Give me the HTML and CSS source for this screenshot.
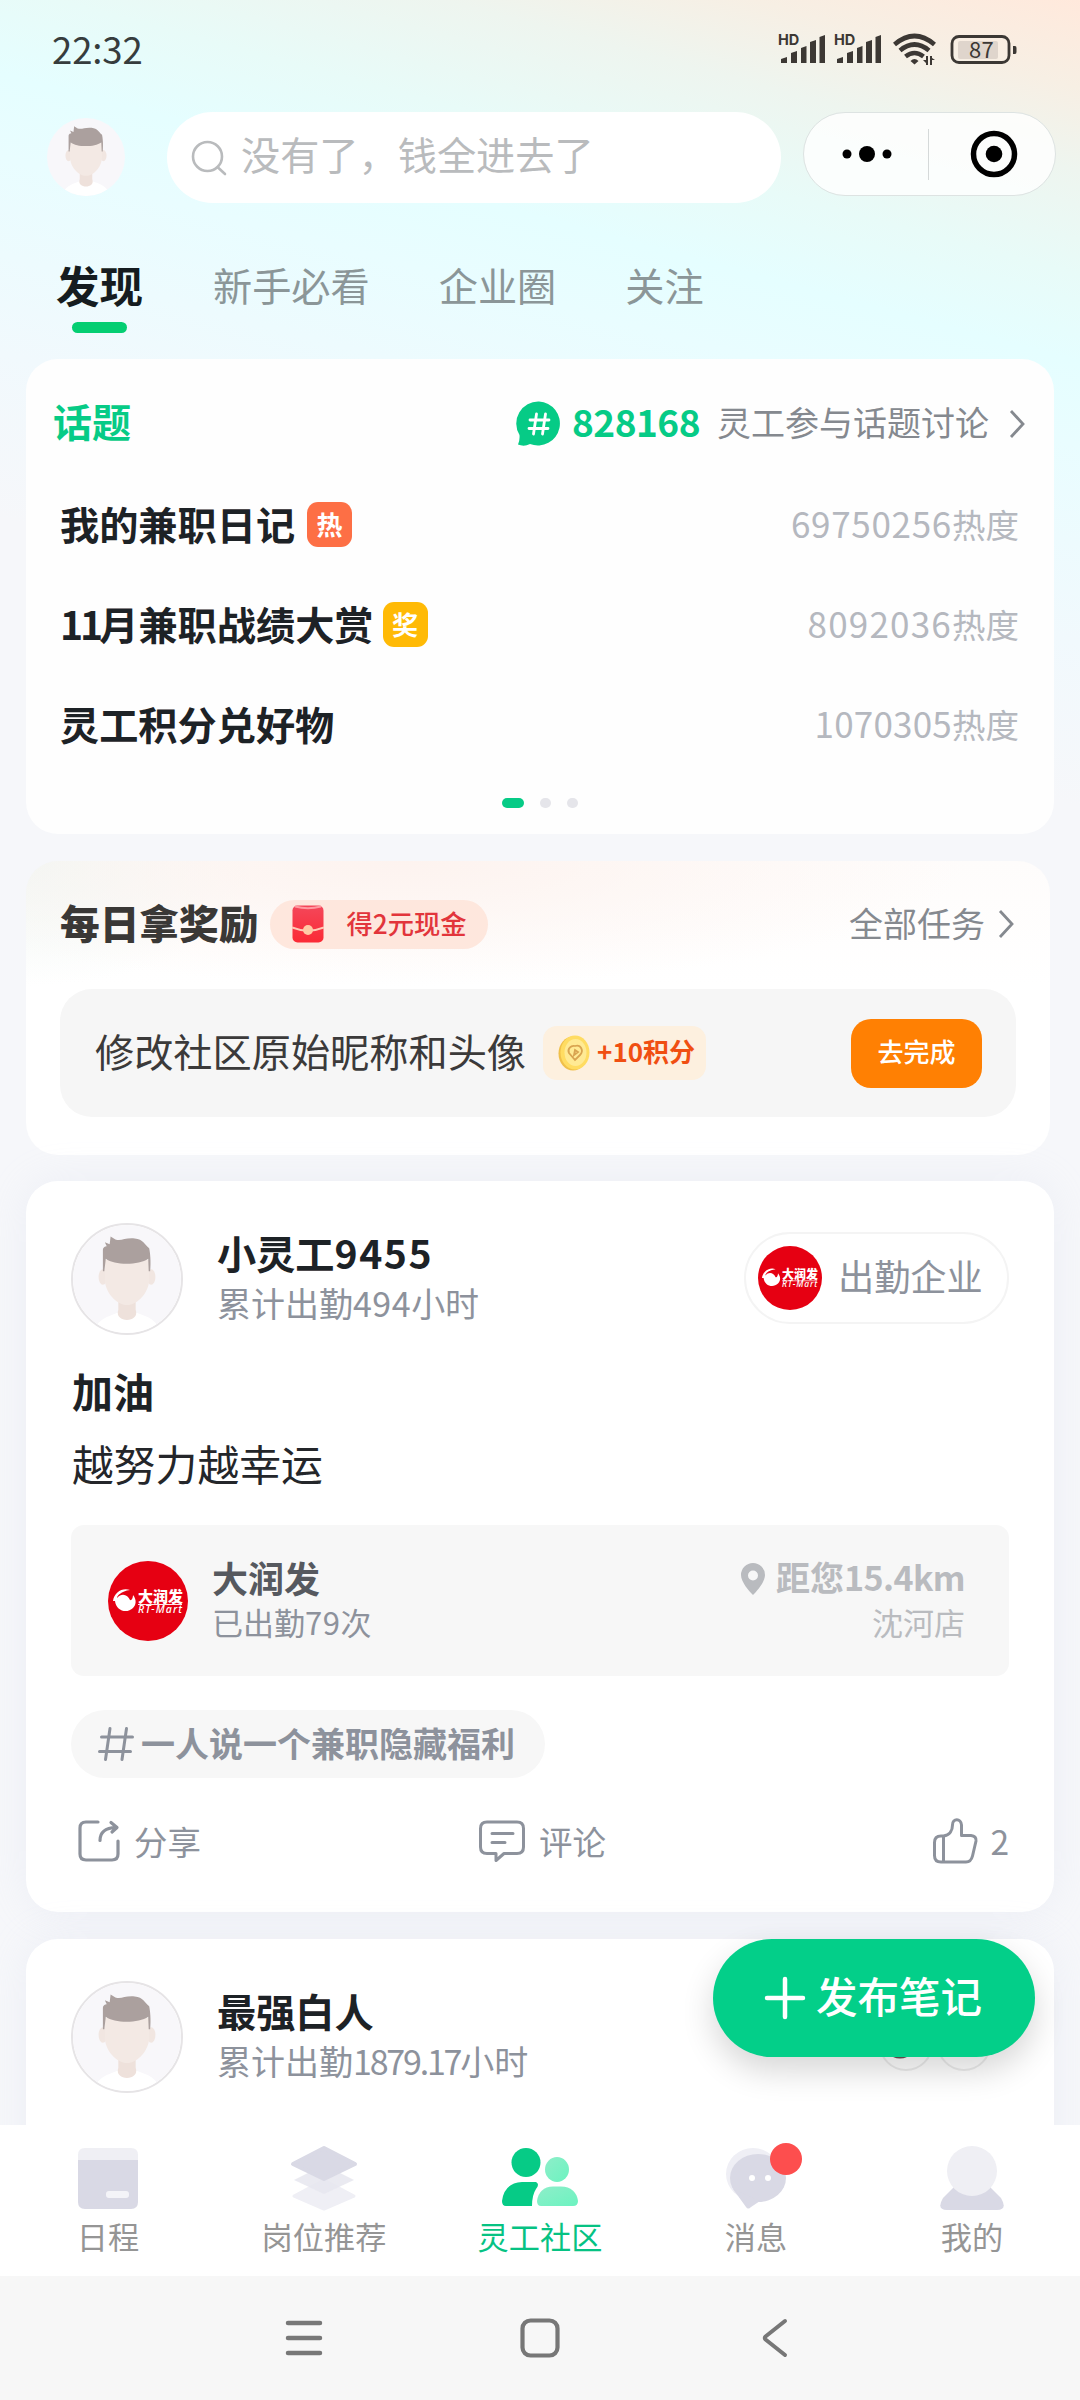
FILE: index.html
```html
<!DOCTYPE html>
<html lang="zh-CN">
<head>
<meta charset="utf-8">
<title>灵工社区</title>
<link rel="stylesheet" href="styles.css">
</head>
<body>
<svg class="defs" width="0" height="0">
  <defs>
    <clipPath id="round"><circle cx="56" cy="56" r="56"/></clipPath>
    <linearGradient id="packet" x1="0" y1="0" x2="0" y2="1"><stop offset="0" stop-color="#f4475a"/><stop offset="1" stop-color="#fb2a35"/></linearGradient>
    <linearGradient id="mint" x1="0" y1="0" x2="1" y2="1"><stop offset="0" stop-color="#8eeec9"/><stop offset="1" stop-color="#6cf3c0"/></linearGradient>
    <symbol id="avatar" viewBox="0 0 112 112">
      <g clip-path="url(#round)">
        <rect width="112" height="112" fill="#f8f7fa"/>
        <path d="M22 112C24 98 36 95 46 91H66C77 95 88 98 90 112Z" fill="#fff"/>
        <path d="M47 74H65V88C70 102 42 102 47 88Z" fill="#eee1db"/>
        <ellipse cx="31" cy="54" rx="4.5" ry="8" fill="#f1e6e1"/>
        <ellipse cx="81" cy="54" rx="4.5" ry="8" fill="#f1e6e1"/>
        <path d="M33 36H79V56C79 70 67 83 56 83S33 70 33 56Z" fill="#f3e9e4"/>
        <path d="M31 48V26C31 22 35 22 35 22L33 18 38 20 39 12 44 15C50 17 54 13 64 14 73 15 74 20 79 24 80 28 81 38 80 48H78.500L78 35C68 42 43 42 34 35L32.500 48Z" fill="#aba09e"/>
      </g>
    </symbol>
    <symbol id="rtmart" viewBox="0 0 80 80">
      <circle cx="40" cy="40" r="40" fill="#e60012"/>
      <path d="M5 40C6 31 15 26 22 29 13 30 9 35 9 37 14 31 20 34 22 39 24 40 25 36 25 34 29 39 28 44 25 47 19 53 8 50 7 40Z" fill="#fff"/>
      <text x="30" y="41" textLength="45" class="logo-cn">大润发</text>
      <path d="M30 43.5H74" stroke="#fff" stroke-width=".9"/>
      <text x="30" y="51.500" textLength="44" class="logo-en">RT-Mart</text>
    </symbol>
    <symbol id="chevron" viewBox="0 0 16 30"><path d="M2 2L14 15 2 28" fill="none" stroke="currentColor" stroke-width="2.8"/></symbol>
  </defs>
</svg>

<div class="screen">
  <header class="status">
    <span class="clock">22:32</span>
    <svg width="242" height="36" viewBox="0 0 242 36" fill="#3c3834">
      <g>
        <text x="2" y="15" class="hd">HD</text>
        <path d="M5 33V29L11 27V33ZM15 33V23L21 21V33ZM25 33V18L30.500 16V33ZM34 33V12L40 10V33ZM43.500 33V7L49 5V33Z"/>
      </g>
      <g transform="translate(56 0)">
        <text x="2" y="15" class="hd">HD</text>
        <path d="M5 33V29L11 27V33ZM15 33V23L21 21V33ZM25 33V18L30.500 16V33ZM34 33V12L40 10V33ZM43.500 33V7L49 5V33Z"/>
      </g>
      <g fill="none" stroke="#3c3834" stroke-width="4.6">
        <path d="M118.500 14.500Q138.500-2.500 158.500 14.500"/>
        <path d="M124 20.500Q138.500 8.500 153 20.500"/>
        <path d="M129.500 26.500Q138.500 19.500 147.500 26.500"/>
      </g>
      <path d="M134.500 31Q138.500 27 142.500 31L138.500 34.500ZM147 30H150V26H152V35H150V33ZM154 26H156V28L159 30H156V35H154Z"/>
      <rect x="182" y="11" width="40" height="18" rx="2" fill="#dfd5cc"/>
      <rect x="176" y="6.500" width="57" height="26" rx="7" fill="none" stroke="#3c3834" stroke-width="2.800"/>
      <path d="M237 16H239Q240.500 16 240.500 18V22Q240.500 24 239 24H237Z"/>
      <text x="193" y="28" class="pct">87</text>
    </svg>
  </header>

  <div class="topbar">
    <svg class="me" width="78" height="78"><use href="#avatar"/></svg>
    <div class="search">
      <svg width="36" height="36" viewBox="0 0 36 36" fill="none" stroke="#b9bbbd" stroke-width="2.600" stroke-linecap="round"><circle cx="16.500" cy="16.500" r="14.500"/><path d="M27 27.500L34 34"/></svg>
      <span>没有了，钱全进去了</span>
    </div>
    <div class="capsule">
      <svg width="50" height="18" viewBox="0 0 50 18"><circle cx="5" cy="9" r="4.500"/><circle cx="25" cy="9" r="8"/><circle cx="45" cy="9" r="4.500"/></svg>
      <i></i>
      <svg width="48" height="48" viewBox="0 0 48 48"><circle cx="24" cy="24" r="20.500" fill="none" stroke="#000" stroke-width="5.500"/><circle cx="24" cy="24" r="8.300"/></svg>
    </div>
  </div>

  <nav class="tabs">
    <b>发现</b><span>新手必看</span><span>企业圈</span><span>关注</span>
  </nav>

  <main class="feed">
    <section class="card topics">
      <div class="head">
        <h2>话题</h2>
        <svg class="bubble" width="46" height="46" viewBox="0 0 46 46"><path d="M23 0.500A22 22 0 1 1 14 43Q8 46 2 43.500Q4 39 3.500 34A22 22 0 0 1 23 .5Z" fill="#06cb86"/><path d="M20.500 13L17.500 33M29.500 13L26.500 33M14 19H33M13 27.500H32" stroke="#fff" stroke-width="2.800" fill="none" stroke-linecap="round"/></svg>
        <b class="count">828168</b>
        <span class="more">灵工参与话题讨论</span>
        <svg class="chev" width="16" height="30"><use href="#chevron"/></svg>
      </div>
      <div class="row"><b>我的兼职日记</b><em class="hot">热</em><span><i>69750256</i>热度</span></div>
      <div class="row"><b><u>11</u>月兼职战绩大赏</b><em class="prize">奖</em><span><i class="wide">8092036</i>热度</span></div>
      <div class="row"><b>灵工积分兑好物</b><span><i class="tight">1070305</i>热度</span></div>
      <div class="dots"><i class="on"></i><i></i><i></i></div>
    </section>

    <section class="card daily">
      <div class="head">
        <h2>每日拿奖励</h2>
        <div class="cash">
          <svg width="32" height="38" viewBox="0 0 32 38"><rect x=".5" y=".5" width="31" height="37" rx="5" fill="url(#packet)"/><path d="M3 1.500Q16 5 29 1.500" stroke="#ff9aa0" stroke-width="2" fill="none"/><path d="M0 22.500Q16 29 32 22.500" stroke="#ffc9b5" stroke-width="2" fill="none"/><circle cx="16" cy="25" r="5" fill="#ffcba6"/></svg>
          <b>得2元现金</b>
        </div>
        <span class="more">全部任务</span>
        <svg class="chev" width="16" height="30"><use href="#chevron"/></svg>
      </div>
      <div class="task">
        <span class="name">修改社区原始昵称和头像</span>
        <div class="points">
          <svg width="32" height="36" viewBox="0 0 32 36"><ellipse cx="15" cy="18.500" rx="14.500" ry="17" fill="#f0c04a"/><ellipse cx="17" cy="17.500" rx="14.500" ry="17" fill="#ffdc62"/><ellipse cx="17.500" cy="17.500" rx="11" ry="13.500" fill="#ffea94"/><path d="M17 11C23 9 26 16 22 20L17 25 11 18C9 14 13 10 17 11ZM17 15L16 20 20 17Z" fill="none" stroke="#d9a450" stroke-width="1.800"/></svg>
          <b>+10积分</b>
        </div>
        <button>去完成</button>
      </div>
    </section>

    <article class="card post">
      <div class="author">
        <svg class="face" width="112" height="112"><use href="#avatar"/></svg>
        <div class="who"><b>小灵工<u>9455</u></b><span>累计出勤<u>494</u>小时</span></div>
        <div class="company"><svg width="64" height="64"><use href="#rtmart"/></svg><span>出勤企业</span></div>
      </div>
      <h3>加油</h3>
      <p>越努力越幸运</p>
      <div class="shop">
        <svg width="80" height="80"><use href="#rtmart"/></svg>
        <div class="left"><b>大润发</b><span>已出勤<u>79</u>次</span></div>
        <div class="right">
          <b><svg width="24" height="32" viewBox="0 0 24 32"><path fill-rule="evenodd" d="M12 0A12 12 0 0 1 24 12C24 19 16 28 12 32 8 28 0 19 0 12A12 12 0 0 1 12 0ZM12 7.500A5 5 0 1 0 12 17.500 5 5 0 1 0 12 7.500Z" fill="#b9bbbf"/></svg>距您<u>15.4km</u></b>
          <span>沈河店</span>
        </div>
      </div>
      <div class="tag">
        <svg width="36" height="36" viewBox="0 0 36 36" fill="none" stroke="#8d929c" stroke-width="3" stroke-linecap="round"><path d="M12 2.500L7.500 33.500M28.500 2.500L24 33.500M3.500 11H34.500M1.500 25.500H32.500"/></svg>
        <b>一人说一个兼职隐藏福利</b>
      </div>
      <div class="actions">
        <span><svg width="42" height="42" viewBox="0 0 42 42" fill="none" stroke="#8d929c" stroke-width="3.200" stroke-linecap="round" stroke-linejoin="round"><path d="M20 2H8Q2 2 2 8V34Q2 40 8 40H34Q40 40 40 34V21M22 20.500Q22 8 38 7.500M33 2.500L39 7.500 34 12"/></svg>分享</span>
        <span><svg width="46" height="44" viewBox="0 0 46 44" fill="none" stroke="#8d929c" stroke-width="3" stroke-linecap="round" stroke-linejoin="round"><path d="M8 3H38Q44.500 3 44.500 9.500V28Q44.500 34.500 38 34.500H25L17 41.500V34.500H8Q1.500 34.500 1.500 28V9.500Q1.500 3 8 3ZM13 14.500H34M13 23.500H26"/></svg>评论</span>
        <span class="like"><svg width="45" height="46" viewBox="0 0 45 46" fill="none" stroke="#8d929c" stroke-width="3" stroke-linejoin="round"><path d="M10.500 18C17 17 19.500 12 19.500 7 19.500 0 28 0 28.500 7V17.500H38Q43.500 18 43 23L39.500 38Q38 44 33 44H8Q1.500 44 1.500 37.500V24.500Q1.500 18 8 18ZM10.500 18V44"/></svg><u>2</u></span>
      </div>
    </article>

    <article class="card post">
      <div class="author">
        <svg class="face" width="112" height="112"><use href="#avatar"/></svg>
        <div class="who"><b>最强白人</b><span>累计出勤<s>1879.17</s>小时</span></div>
        <svg class="pair" width="112" height="56" viewBox="0 0 112 56" fill="#fff" stroke="#ececec" stroke-width="2"><circle cx="27" cy="27" r="26"/><circle cx="85" cy="27" r="26"/><ellipse cx="21" cy="37" rx="9" ry="4.500" fill="#6a5050" stroke="none"/></svg>
      </div>
    </article>
  </main>

  <nav class="bar">
    <a><svg width="66" height="70" viewBox="0 0 66 70"><path d="M3 21V14Q3 7 10 7H56Q63 7 63 14V21Z" fill="#efeff4"/><path d="M3 19H63V61Q63 68 56 68H10Q3 68 3 61Z" fill="#d9d9e5"/><rect x="31" y="50" width="23" height="7" rx="3" fill="#f4f4f8"/></svg>日程</a>
    <a><svg width="70" height="70" viewBox="0 0 70 70" stroke-linejoin="round" stroke-width="6"><path d="M35 39L65 55 35 68 5 55Z" fill="#efeff5" stroke="#efeff5" stroke-width="3"/><path d="M35 24L65 39 35 53 5 39Z" fill="#e6e6ee" fill-opacity=".85"/><path d="M35 7L66 23 35 38 4 23Z" fill="#d9d9e5" stroke="#d9d9e5" stroke-width="4"/></svg>岗位推荐</a>
    <a class="on"><svg width="78" height="70" viewBox="0 0 78 70"><ellipse cx="25" cy="21.500" rx="14.500" ry="14.500" fill="#06cb86"/><path d="M1 60Q3 42 21 41H35Q39 43 35 48 31 54 31 65H5Q1 65 1 60Z" fill="#06cb86"/><ellipse cx="56" cy="28.500" rx="12" ry="12.500" fill="url(#mint)"/><path d="M36 60Q38 46 52 45.500H60Q75 46 77 60 77 65 72 65H40Q36 65 36 60Z" fill="url(#mint)"/></svg>灵工社区</a>
    <a><svg width="72" height="70" viewBox="0 0 72 70"><ellipse cx="33" cy="33" rx="27" ry="26" fill="#efeff5"/><ellipse cx="38" cy="37" rx="28" ry="24" fill="#d9d9e5"/><path d="M13 48L26 66Q28 69 31 66L40 60Z" fill="#d9d9e5"/><circle cx="32" cy="37" r="3" fill="#fff"/><circle cx="48" cy="37" r="3" fill="#fff"/></svg>消息<i class="badge"></i></a>
    <a><svg width="66" height="72" viewBox="0 0 66 72"><path d="M16 46L4 58Q-3 70 8 70H58Q69 70 62 58L50 46Z" fill="#d9d9e5"/><circle cx="33" cy="31" r="25" fill="#efeff4"/></svg>我的</a>
  </nav>
  <footer class="keys">
    <svg width="38" height="38" viewBox="0 0 38 38" stroke="#777" stroke-width="4.500" stroke-linecap="round"><path d="M3 4H35M3 19H35M3 34H35"/></svg>
    <svg width="40" height="40" viewBox="0 0 40 40" fill="none" stroke="#777" stroke-width="4.200"><rect x="2.500" y="2.500" width="35" height="35" rx="8"/></svg>
    <svg width="26" height="40" viewBox="0 0 26 40" fill="none" stroke="#777" stroke-width="4" stroke-linecap="round" stroke-linejoin="round"><path d="M23 3L3.500 18.500Q2 20 3.500 21.500L23 37"/></svg>
  </footer>

  <div class="fab">
    <svg width="42" height="44" viewBox="0 0 42 44" stroke="#fff" stroke-width="4.500" stroke-linecap="round"><path d="M3 22H39M21 3V41"/></svg>
    <span>发布笔记</span>
  </div>
</div>
</body>
</html>
```
FILE: styles.css
```css
* { box-sizing: border-box; margin: 0; padding: 0; }
i, em { font-style: normal; }
u, s { text-decoration: none; }
body { width: 1080px; height: 2400px; overflow: hidden; font-family: "Noto Sans CJK SC", sans-serif; color: #1d2226; }
svg { display: block; flex: none; }
.defs { position: absolute; }
.logo-cn { font: 900 15px "Noto Sans CJK SC", sans-serif; fill: #fff; }
.logo-en { font: italic 500 10.500px "Noto Sans", sans-serif; fill: #fff; }

.screen {
  position: relative; display: flex; flex-direction: column; width: 1080px; height: 2400px; overflow: hidden;
  background: linear-gradient(195deg, #ffe9dc 0, #f7efe4 85px, #eef5ef 165px, #e8fbf8 265px, #e5feff 350px, #e9fdff 430px, #f1f9fd 620px, #f6f7fa 780px) 0 0 / 1080px 1000px no-repeat #f6f7fa;
}

.status { display: flex; justify-content: space-between; height: 112px; padding: 30px 62px 0 52px; }
.clock { margin-top: -1px; font: 400 36.500px/40px "Noto Sans CJK SC", sans-serif; letter-spacing: -.1px; color: #363c3d; }
.hd { font: 700 14.500px Inter, sans-serif; }
.pct { font: 400 22px "Noto Sans CJK SC", sans-serif; letter-spacing: .3px; }

.topbar { display: flex; height: 92px; padding-left: 47px; }
.me { margin: 6px 42px 0 0; }
.search { display: flex; align-items: center; width: 614px; height: 91px; padding-left: 24px; border-radius: 46px; background: #fff; font-size: 39.200px; line-height: 91px; color: #b9bbbd; }
.search span { margin: -8px 0 0 14px; }
.capsule { display: flex; align-items: center; width: 253px; height: 84px; margin-left: 22px; padding-left: 38px; border: 1px solid #dde3e2; border-radius: 42px; background: rgba(255,255,255,.8); }
.capsule i { width: 1px; height: 51px; margin: 0 41px 0 36px; background: #d5d9d9; }

.tabs { display: flex; height: 155px; padding: 48px 0 0 56px; font-size: 39.200px; line-height: 64px; color: #8b9698; }
.tabs span { margin-right: 69px; }
.tabs b { position: relative; margin: 1px 70px 0 0; font-size: 43.500px; color: #151c20; }
.tabs b::after { content: ""; position: absolute; left: 16px; top: 69px; width: 55px; height: 11px; border-radius: 6px; background: #04ce72; }

.feed { flex: 1; min-height: 0; overflow: hidden; padding: 0 26px; }
.card { border-radius: 32px; background: #fff; }
.head { display: flex; align-items: center; }
.more { font-size: 34px; color: #85898f; margin-top: -4px; }
.chev { color: #85898f; }

.topics { height: 475px; background: #fefefe; }
.topics .head { height: 66px; padding: 33px 29px 0 27px; box-sizing: content-box; }
.topics h2 { flex: 1; font-size: 39px; line-height: 60px; color: #06cb86; margin-top: -11px; }
.topics .bubble, .topics .chev { margin-top: -2px; }
.topics .more { margin-top: -7px; }
.count { margin: -9px 17px 0 10px; font-size: 37px; letter-spacing: -.5px; color: #06cb86; }
.topics .chev { margin-left: 20px; }
.row { display: flex; align-items: center; height: 100px; padding: 0 35px 0 34px; }
.topics .head + .row { margin-top: 18px; }
.row b { font-size: 39.200px; line-height: 60px; margin-top: -7px; }
.row b u { letter-spacing: -3px; margin-right: -1px; }
.row em { width: 45px; height: 45px; margin: -3px 0 0 12px; border-radius: 11px; background: #fd6f45; color: #fff; font: 700 26px/43px "Noto Sans CJK SC", sans-serif; text-align: center; }
.row .prize { margin-left: 9px; background: #ffba06; }
.row span { margin: -7px 0 0 auto; font-size: 33.500px; color: #b5b8bf; }
.row i { font-size: 35px; letter-spacing: .7px; }
.row .wide { letter-spacing: 1.200px; }
.row .tight { letter-spacing: .2px; }
.dots { display: flex; justify-content: center; gap: 16px; margin-top: 22px; }
.dots i { width: 11px; height: 10px; border-radius: 5px; background: #e5e5ea; }
.dots .on { width: 22px; background: #06cb86; }

.daily { width: 1024px; height: 294px; margin-top: 27px; padding: 38px 34px 0; background: radial-gradient(ellipse 560px 125px at 380px 0, #fdf3ef, rgba(255,255,255,0)), radial-gradient(ellipse 240px 125px at 0 0, #f0f7f4, rgba(255,255,255,0)), linear-gradient(#fefcfb, #fff 125px); }
.daily .head { height: 50px; }
.daily h2 { font-size: 39.700px; line-height: 50px; font-weight: 900; color: #3a3836; margin-top: -4px; }
.cash { display: flex; align-items: center; height: 49px; width: 218px; margin-left: 12px; padding-left: 22px; border-radius: 25px; background: #fee7dd; color: #e2353b; font-size: 26.300px; line-height: 49px; }
.cash b { margin: -4px 0 0 22px; font-weight: 500; }
.daily .more { margin-left: auto; }
.daily .chev { margin: 0 2px 0 13px; }
.task { display: flex; align-items: center; width: 956px; height: 128px; margin-top: 40px; padding: 0 34px; border-radius: 32px; background: #f6f6f6; }
.name { font-size: 39.200px; color: #3b3a3a; margin: -7px 0 0 1px; }
.points { display: flex; align-items: center; width: 163px; height: 54px; margin-left: 17px; padding-left: 15px; border-radius: 14px; background: #fdf0df; color: #f04f12; font-size: 26px; white-space: nowrap; }
.points b { margin: -5px 0 0 7px; }
.task button { width: 131px; height: 69px; margin-left: auto; padding-bottom: 5px; border: 0; border-radius: 20px; background: #ff8003; color: #fff; font: 500 26px "Noto Sans CJK SC", sans-serif; }

.post { height: 731px; margin-top: 26px; padding: 42px 45px 0; box-shadow: 0 0 40px rgba(205,208,228,.2); }
.post + .post { margin-top: 27px; }
.author { position: relative; display: flex; height: 112px; }
.face { border-radius: 50%; border: 2px solid #e6e4e6; }
.who { flex: 1; margin: 2px 0 0 34px; }
.who b { display: block; height: 54px; font-size: 39.200px; line-height: 54px; }
.who b u { letter-spacing: 1.500px; }
.who span { display: block; font-size: 34px; line-height: 46px; margin-top: 1px; color: #8d929c; }
.who span u { letter-spacing: .5px; }
.who s { letter-spacing: -2.200px; }
.company { display: flex; align-items: center; width: 265px; height: 92px; margin-top: 9px; padding-left: 12px; border: 2px solid #f4f4f4; border-radius: 46px; font-size: 36.200px; color: #8d929c; }
.company span { margin: -6px 0 0 16px; }
.pair { position: absolute; right: 18px; top: 36px; }
.post h3 { margin: 25px 0 0 1px; font-size: 41px; line-height: 60px; }
.post p { margin: 13px 0 0 1px; font-size: 41.800px; line-height: 60px; color: #24262a; }
.shop { display: flex; height: 151px; margin: 32px 0 0; padding: 36px 44px 0 37px; border-radius: 13px; background: #f7f7f7; }
.left { flex: 1; margin-left: 24px; }
.left b, .right b { display: block; height: 46px; line-height: 46px; font-size: 36px; color: #56595f; margin-top: -7px; }
.left span, .right span { display: block; line-height: 44px; font-size: 31px; color: #8d929c; }
.left u { letter-spacing: .5px; }
.right { text-align: right; }
.right b { display: flex; align-items: center; justify-content: flex-end; font-size: 34px; color: #b9bbbf; }
.right svg { margin: 4px 11px 0 0; }
.right u { letter-spacing: -.6px; }
.right span { color: #b9bbbf; }
.tag { display: flex; align-items: center; width: 474px; height: 68px; margin-top: 34px; padding-left: 27px; border-radius: 34px; background: #f7f7f7; color: #8d929c; font-size: 34px; }
.tag b { margin: -4px 0 0 7px; }
.actions { display: grid; grid-template-columns: 401px 1fr auto; align-items: center; margin-top: 37px; padding: 0 0 0 7px; height: 52px; font-size: 33.500px; line-height: 52px; color: #8d929c; }
.actions span { display: flex; align-items: center; gap: 14px; }
.actions .like { gap: 12px; }

.bar { display: flex; height: 151px; background: #fff; }
.bar a { position: relative; flex: 1; display: flex; flex-direction: column; align-items: center; padding-top: 15px; font-size: 31.200px; line-height: 44px; color: #959595; }
.bar svg { height: 72px; margin-bottom: 2px; }
.bar .on { color: #06c283; }
.badge { position: absolute; left: 122px; top: 18px; width: 32px; height: 32px; border-radius: 50%; background: #fd4e4e; }
.keys { height: 124px; padding-left: 285px; display: flex; align-items: center; background: #f7f7f7; }
.keys svg:nth-child(2) { margin: 0 202px 0 197px; }

.fab { position: absolute; left: 713px; top: 1939px; display: flex; align-items: center; width: 322px; height: 118px; padding-left: 51px; border-radius: 59px; background: #03cf89; color: #fff; font-size: 41.500px; font-weight: 500; box-shadow: 0 14px 32px rgba(0,0,0,.16); }
.fab span { margin: -6px 0 0 10px; }
```
